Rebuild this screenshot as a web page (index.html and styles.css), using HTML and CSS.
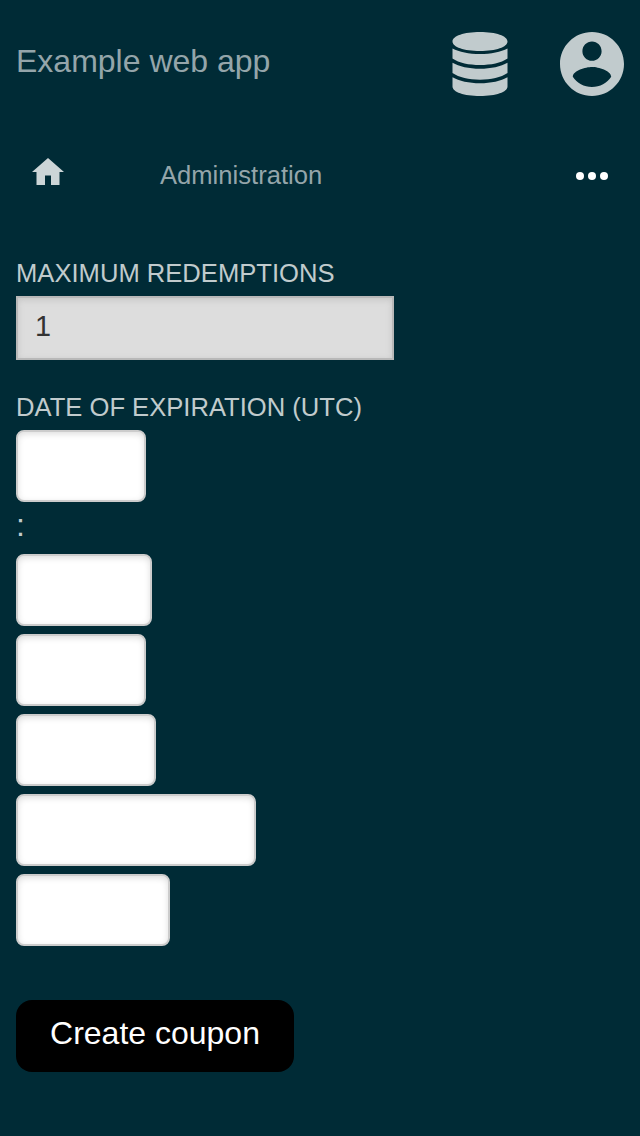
FILE: index.html
```html
<!DOCTYPE html>
<html lang="en">
<head>
<meta charset="utf-8">
<title>Example web app</title>
<link rel="stylesheet" href="styles.css">
</head>
<body>
<header class="top">
  <span class="brand">Example web app</span>
  <svg class="db" viewBox="0 0 56 64"><path d="M.5 9.500C.5 4 12 0 28 0S55.500 4 55.500 9.500 44 19 28 19 .5 15 .5 9.500ZM.5 16.500C7 20 17 22 28 22S49 20 55.500 16.500V26.500C49 31 39 33 28 33S7 31 .5 26.500ZM.5 30.700C7 34.500 17 36.700 28 36.700S49 34.500 55.500 30.700V41C49 45.500 39 47.700 28 47.700S7 45.500 .5 41ZM.5 45.200C7 49 17 51.200 28 51.200S49 49 55.500 45.200V54.500C55.500 60 44 64 28 64S.5 60 .5 54.500Z"/></svg>
  <svg class="user" viewBox="2 2 20 20"><path d="M12 2C6.480 2 2 6.480 2 12s4.480 10 10 10 10-4.480 10-10S17.520 2 12 2zm0 3c1.660 0 3 1.340 3 3s-1.340 3-3 3-3-1.340-3-3 1.340-3 3-3zm0 14.200c-2.500 0-4.710-1.280-6-3.220.030-1.990 4-3.080 6-3.080 1.990 0 5.970 1.090 6 3.080-1.290 1.940-3.500 3.220-6 3.220z"/></svg>
</header>
<nav class="nav">
  <svg class="home" viewBox="0 0 32 27"><path d="M16 0 32 14H27.500V27H19V17.500H13V27H4.500V14H0Z"/></svg>
  <span class="crumb">Administration</span>
  <svg class="more" viewBox="0 0 32 8"><circle cx="4" cy="4" r="4"/><circle cx="16" cy="4" r="4"/><circle cx="28" cy="4" r="4"/></svg>
</nav>
<main class="form">
  <label class="label" for="max">MAXIMUM REDEMPTIONS</label>
  <input class="max" id="max" value="1">
  <div class="label date-label">DATE OF EXPIRATION (UTC)</div>
  <div class="field hour"></div>
  <div class="colon">:</div>
  <div class="field minute"></div>
  <div class="field day"></div>
  <div class="field weekday"></div>
  <div class="field month"></div>
  <div class="field year"></div>
  <button class="submit">Create coupon</button>
</main>
</body>
</html>
```
FILE: styles.css
```css
* { box-sizing: border-box; }
body { margin: 0; min-height: 1136px; background: #002b36; color: #c1cbcd; font-family: "Liberation Sans", Arial, sans-serif; font-size: 32px; }
svg { display: block; fill: #c1cbcd; }
.top { display: flex; align-items: center; height: 128px; padding: 0 16px; }
.brand { flex: 1; color: #94a5aa; line-height: 36px; padding-bottom: 6px; }
.db { width: 56px; height: 64px; margin-right: 52px; }
.user { width: 64px; height: 64px; }
.nav { display: flex; align-items: center; height: 96px; padding: 0 32px; }
.home { width: 32px; height: 27px; margin-top: -8.5px; fill: #ccd5d7; }
.crumb { flex: 1; margin-left: 96px; padding-bottom: 2px; font-size: 25.6px; color: #94a5aa; }
.more { width: 32px; height: 8px; fill: #fff; }
.form { display: flex; flex-direction: column; align-items: flex-start; padding: 34px 16px 0; }
.label { font-size: 25.6px; line-height: 30px; }
.max { width: 378px; height: 64px; margin: 8px 0 0; padding: 0 17px 4px; border: 2px solid #b8b8b8; border-radius: 0; background: #ddd; color: #333; box-shadow: inset 0 2px 6px #c6c6c6; font: 28.8px "Liberation Sans", Arial, sans-serif; }
.date-label { margin-top: 32px; }
.field { height: 72px; margin-bottom: 8px; border: 2px solid #ccc; border-radius: 8px; background: #fff; box-shadow: inset 0 2px 6px #ddd; }
.hour { width: 130px; margin-top: 8px; }
.colon { height: 44px; line-height: 30px; }
.minute { width: 136px; }
.day { width: 130px; }
.weekday { width: 140px; }
.month { width: 240px; }
.year { width: 154px; }
.submit { width: 278px; height: 72px; margin-top: 46px; padding: 0 0 6px; border: 0; border-radius: 16px; background: #000; color: #fff; font: 32px "Liberation Sans", Arial, sans-serif; }
```
